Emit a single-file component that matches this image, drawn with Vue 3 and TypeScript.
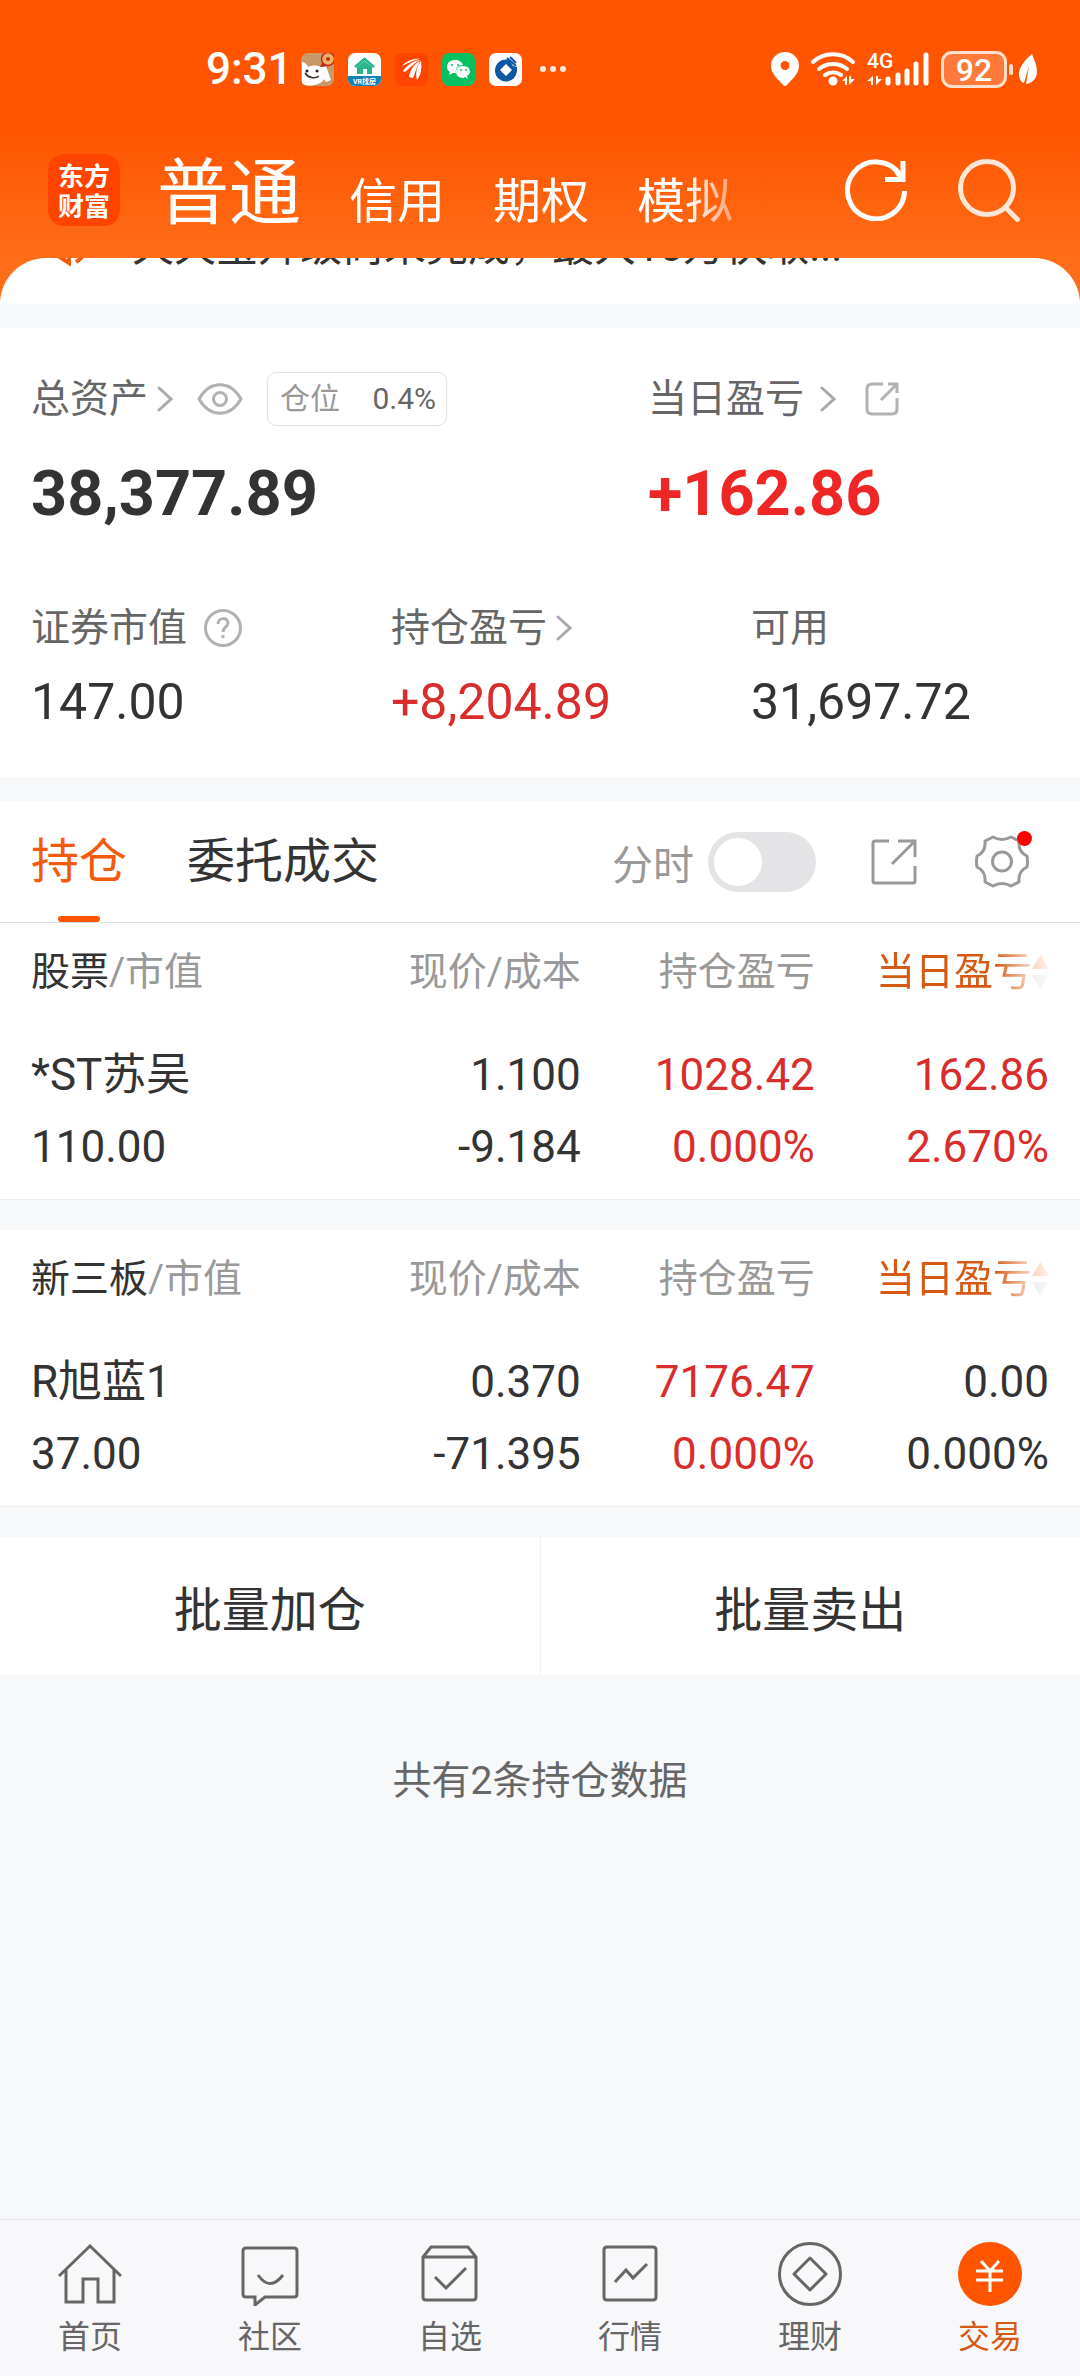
<script setup lang="ts">
import { ref } from 'vue'

interface Holding {
  name: string
  value: string
  price: string
  cost: string
  profit: string
  profitRate: string
  day: string
  dayRate: string
  dayUp: boolean
}

interface Section {
  title: string
  rows: Holding[]
}

const showTrend = ref(false)

const accountTabs = ['普通', '信用', '期权', '模拟']

const sections: Section[] = [
  {
    title: '股票',
    rows: [
      {
        name: '*ST苏吴', value: '110.00', price: '1.100', cost: '-9.184',
        profit: '1028.42', profitRate: '0.000%', day: '162.86', dayRate: '2.670%', dayUp: true,
      },
    ],
  },
  {
    title: '新三板',
    rows: [
      {
        name: 'R旭蓝1', value: '37.00', price: '0.370', cost: '-71.395',
        profit: '7176.47', profitRate: '0.000%', day: '0.00', dayRate: '0.000%', dayUp: false,
      },
    ],
  },
]
</script>

<template>
  <div class="page">
    <header class="top">
      <div class="status">
        <time class="clock">9:31</time>
        <div class="apps">
          <svg class="app" viewBox="0 0 33 33">
            <rect width="33" height="33" rx="7" fill="#c99a68" />
            <path d="M1 9c3 0 5 3 6 5 4-2 9-2 13 0l5-1 5 14-5 2-2-3c-2 6-18 9-22 4z" fill="#fff" />
            <path d="M4 20c3 5 10 6 14 3" fill="none" stroke="#3a2a22" stroke-width="1.5" />
            <circle cx="6" cy="18" r="1.5" fill="#222" /><circle cx="16" cy="18" r="1.5" fill="#222" />
            <path d="M19 14l3-6 6 5z" fill="#c8281e" /><circle cx="27" cy="6" r="6.500" fill="#f0b265" stroke="#c8281e" stroke-width="1.500" />
            <circle cx="27" cy="6" r="2" fill="#c8281e" />
          </svg>
          <svg class="app" viewBox="0 0 33 33">
            <rect width="33" height="33" rx="7" fill="#fff" />
            <path d="M0 23h33v3a7 7 0 0 1-7 7H7a7 7 0 0 1-7-7z" fill="#1283b5" />
            <path d="M7 14l9.500-8 9.500 8" fill="none" stroke="#27b58c" stroke-width="2.500" />
            <path d="M9 14l7.500-6 7.500 6v7h-5v-5h-4v5H9z" fill="#27b58c" />
            <text x="16.500" y="31" text-anchor="middle" font-size="7" font-weight="700" fill="#fff">VR找房</text>
          </svg>
          <svg class="app" viewBox="0 0 33 33">
            <rect width="33" height="33" rx="7" fill="#ff4400" />
            <path d="M7 13C12 7 20 5 25 6c-6 1-12 4-18 7zM8 18c4-6 10-10 17-11-6 3-10 8-15 12zM14 24c1-7 5-13 11-16-3 5-5 12-7 17zM22 27c-2-7 0-14 4-19 1 8 0 14-4 19z" fill="#fff" />
          </svg>
          <svg class="app" viewBox="0 0 33 33">
            <rect width="33" height="33" rx="7" fill="#07c160" />
            <path d="M13 7c-5 0-8 3-8 7 0 2 1 4 3 5l-1 3 4-2h3c-1-5 2-8 7-8-1-3-4-5-8-5z" fill="#fff" />
            <path d="M21 13c-4 0-7 2-7 6 0 3 3 6 7 6l2-1 3 2-1-3c2-1 3-3 3-4 0-4-3-6-7-6z" fill="#fff" />
            <g fill="#07c160"><circle cx="10" cy="12" r="1" /><circle cx="16" cy="12" r="1" /><circle cx="19" cy="17" r="1" /><circle cx="24" cy="17" r="1" /></g>
          </svg>
          <svg class="app" viewBox="0 0 33 33">
            <rect width="33" height="33" rx="7" fill="#fff" />
            <path fill-rule="evenodd" d="M20 6.500h-3A11 11 0 1 0 28 17v-3l-4-1zM17 11l6 6-6 6-6-6z" fill="#0b57a4" />
            <path d="M18 5l9 8M21 4l6 6" stroke="#0b57a4" stroke-width="2" />
          </svg>
        </div>
        <svg class="dots" viewBox="0 0 26 6"><g fill="#ffe9dc"><circle cx="3" cy="3" r="3" /><circle cx="13" cy="3" r="3" /><circle cx="23" cy="3" r="3" /></g></svg>
        <div class="signals">
          <svg width="28" height="34" viewBox="0 0 28 34"><path fill-rule="evenodd" d="M14 0a14 14 0 0 0-14 14c0 8 8 14 12 19q2 2 4 0c4-5 12-11 12-19A14 14 0 0 0 14 0zm0 9a4.500 4.500 0 1 1 0 9 4.500 4.500 0 0 1 0-9z" fill="#fff" /></svg>
          <svg width="44" height="34" viewBox="0 0 44 34">
            <g fill="none" stroke="#fff" stroke-width="4" stroke-linecap="round"><path d="M2 10a30 30 0 0 1 40 0" /><path d="M8 17a22 22 0 0 1 28 0" /><path d="M14 23a14 14 0 0 1 16 0" /></g>
            <circle cx="22" cy="29" r="4.500" fill="#fff" /><path d="M31 29l5-5v9h-2v-4zM38 24v9l6-6h-4v-3z" fill="#fff" />
          </svg>
          <svg class="mobile" width="62" height="36" viewBox="0 0 62 36">
            <text x="0" y="17" font-size="21" font-weight="500" fill="#fff">4G</text>
            <path d="M0 30l6-5v9H4v-4zM9 25v9l6-6h-4v-3z" fill="#fff" />
            <g stroke="#fff" stroke-width="5" stroke-linecap="round"><path d="M21 28v4M31 24v8M40 20v12M49 13v19M59 4v28" /></g>
          </svg>
          <span class="battery">92</span>
          <i class="nub"></i>
          <svg class="leaf" width="18" height="30" viewBox="0 0 18 30"><path d="M13 0C6 6 0 13 0 20c0 5 2 8 5 9l5-17-3 18c7-1 11-6 11-13 0-6-3-11-5-17z" fill="#fff" /></svg>
        </div>
      </div>
      <div class="title">
        <div class="logo"><span>东方</span><span>财富</span></div>
        <nav class="accounts">
          <a v-for="(t, i) in accountTabs" :key="t" href="#" :class="{ current: i === 0 }">{{ t }}</a>
        </nav>
        <button class="icon-btn" aria-label="刷新">
          <svg width="62" height="62" viewBox="0 0 62 62" fill="none" stroke="#fff" stroke-width="5"><path d="M59.500 32A28.500 28.500 0 1 1 55 16" /><path d="M58 2v18.500H40M57 20L50 10" /></svg>
        </button>
        <button class="icon-btn search" aria-label="搜索">
          <svg width="62" height="64" viewBox="0 0 62 64" fill="none" stroke="#ffe6d6" stroke-width="5"><circle cx="29" cy="30" r="26.500" /><path d="M47 49l14 14" /></svg>
        </button>
      </div>
      <div class="notice">
        <svg width="40" height="40" viewBox="0 0 40 40" fill="none" stroke="#f25a0e" stroke-width="4"><path d="M20 2v35L6 28V12zM27 36q9-5 9-16" /></svg>
        <p>天天宝升级尚未完成，最大10万快取...</p>
      </div>
    </header>

    <section class="assets">
      <div class="asset-row main-row">
        <div class="cell-block">
          <div class="label">
            <a href="#">总资产<svg class="chev" viewBox="0 0 16 26"><path d="M2 2l12 11L2 24" /></svg></a>
            <button class="eye" aria-label="显示或隐藏">
              <svg width="46" height="32" viewBox="0 0 46 32" fill="none" stroke="#b2b2b2" stroke-width="3"><path d="M2 16C13-3 33-3 44 16 33 35 13 35 2 16z" /><circle cx="23" cy="16" r="6.500" /></svg>
            </button>
            <span class="ratio"><em>仓位</em><b>0.4%</b></span>
          </div>
          <strong>38,377.89</strong>
        </div>
        <div class="cell-block">
          <div class="label">
            <a href="#" class="wide">当日盈亏<svg class="chev" viewBox="0 0 16 26"><path d="M2 2l12 11L2 24" /></svg></a>
            <button class="share-small" aria-label="分享">
              <svg width="34" height="34" viewBox="0 0 34 34" fill="none" stroke="#b2b2b2" stroke-width="3"><path d="M18 2H7Q2 2 2 7v20q0 5 5 5h20q5 0 5-5V16M16 18L32 2M23 2h9v9" /></svg>
            </button>
          </div>
          <strong class="up">+162.86</strong>
        </div>
      </div>
      <div class="asset-row">
        <div class="cell-block">
          <div class="label">
            <span>证券市值</span>
            <button class="help" aria-label="说明">
              <svg width="38" height="38" viewBox="0 0 38 38" fill="none" stroke="#b2b2b2" stroke-width="3"><circle cx="19" cy="19" r="17.500" /><path d="M14 15c0-7 10-7 10-1 0 4-5 4-5 9" /><path d="M19 26v3" /></svg>
            </button>
          </div>
          <span class="num">147.00</span>
        </div>
        <div class="cell-block">
          <div class="label"><a href="#">持仓盈亏<svg class="chev" viewBox="0 0 16 26"><path d="M2 2l12 11L2 24" /></svg></a></div>
          <span class="num up">+8,204.89</span>
        </div>
        <div class="cell-block">
          <div class="label"><span>可用</span></div>
          <span class="num">31,697.72</span>
        </div>
      </div>
    </section>

    <div class="tabs">
      <a href="#" class="tab current">持仓</a>
      <a href="#" class="tab">委托成交</a>
      <label class="trend" for="trend">分时</label>
      <input id="trend" v-model="showTrend" class="switch" type="checkbox" />
      <button class="share-big" aria-label="分享持仓">
        <svg width="46" height="46" viewBox="0 0 46 46" fill="none" stroke="#999" stroke-width="3"><path d="M18 2H4Q2 2 2 4v38q0 2 2 2h38q2 0 2-2V27M21 25L44 2M27 2h17v16" /></svg>
      </button>
      <button class="gear" aria-label="设置">
        <svg width="54" height="53" viewBox="0 0 54 53" fill="none" stroke="#999" stroke-width="3" stroke-linejoin="round"><path d="M18 2Q27 7 36 2L44 6Q43 17 52 21 53 27 52 32 43 36 44 47L36 51Q27 46 18 51L10 47Q11 36 2 32 1 27 2 21 11 17 10 6z" /><circle cx="27" cy="26.500" r="9.500" /></svg>
      </button>
    </div>

    <table v-for="s in sections" :key="s.title" class="holdings">
      <colgroup><col class="c1" /><col class="c2" /><col class="c3" /><col class="c4" /></colgroup>
      <thead>
        <tr>
          <th><b>{{ s.title }}</b>/市值</th>
          <th>现价/成本</th>
          <th>持仓盈亏</th>
          <th><span class="sort">当日盈亏<svg width="17" height="36" viewBox="0 0 17 36"><path d="M8.500 1L17 15H0z" fill="#ff5500" /><path d="M8.500 35L17 21H0z" fill="#bbb" /></svg></span></th>
        </tr>
      </thead>
      <tbody>
        <tr v-for="r in s.rows" :key="r.name">
          <td><div>{{ r.name }}</div><div>{{ r.value }}</div></td>
          <td><div>{{ r.price }}</div><div>{{ r.cost }}</div></td>
          <td class="up"><div>{{ r.profit }}</div><div>{{ r.profitRate }}</div></td>
          <td :class="{ up: r.dayUp }"><div>{{ r.day }}</div><div>{{ r.dayRate }}</div></td>
        </tr>
      </tbody>
    </table>

    <div class="batch">
      <button>批量加仓</button>
      <button>批量卖出</button>
    </div>

    <p class="total">共有2条持仓数据</p>

    <nav class="bottom">
      <a href="#">
        <svg viewBox="0 0 64 64"><path d="M1 34L32 4l31 30M8 28v32h17V37h15v23h16V28" /></svg>
        首页
      </a>
      <a href="#">
        <svg viewBox="0 0 64 64"><path d="M8 6h48q3 0 3 3v43q0 3-3 3H27l-10 8v-8H8q-3 0-3-3V9q0-3 3-3z" /><path d="M20 33q12 17 25 0" /></svg>
        社区
      </a>
      <a href="#">
        <svg viewBox="0 0 64 64"><path d="M5 15v40q0 3 3 3h47q3 0 3-3V15l-8-10H13zM5 15h53M17 35l11 11 20-20" /></svg>
        自选
      </a>
      <a href="#">
        <svg viewBox="0 0 64 64"><path d="M9 5h46q3 0 3 3v47q0 3-3 3H9q-3 0-3-3V8q0-3 3-3zM17 40l11-12 7 8 14-14" /></svg>
        行情
      </a>
      <a href="#">
        <svg viewBox="0 0 64 64"><circle cx="32" cy="32" r="30.500" /><path d="M32 16l16 16-16 16-16-16z" stroke-linejoin="round" /></svg>
        理财
      </a>
      <a href="#" class="current">
        <svg viewBox="0 0 64 64"><circle cx="32" cy="32" r="32" fill="#ff5500" stroke="none" /><path d="M23 19l9 10 9-10M18 29h27M18 38h27M32 29v21" stroke="#fff" /></svg>
        交易
      </a>
    </nav>
  </div>
</template>

<style>
body {
  background: #f6f8fa;
}
</style>

<style scoped>
.page {
  display: flex;
  flex-direction: column;
  min-height: 100vh;
  background: #f7f8fa;
  color: #333;
  font-family: Roboto, "Noto Sans CJK SC", sans-serif;
}
a {
  color: inherit;
  text-decoration: none;
}
button {
  display: flex;
  align-items: center;
  justify-content: center;
  padding: 0;
  border: 0;
  background: none;
  color: inherit;
  font: inherit;
}
svg {
  display: block;
  flex: none;
}
p {
  margin: 0;
}
.up {
  color: #d92d2d;
}

.top {
  background: linear-gradient(#ff5500 130px, #ff6d18 258px);
}
.status {
  display: flex;
  align-items: center;
  height: 138px;
  padding: 0 43px 0 206px;
}
.clock {
  width: 95px;
  color: #fff;
  font-size: 44px;
  font-weight: 500;
  line-height: 52px;
}
.apps {
  display: flex;
  gap: 14px;
}
.app {
  width: 33px;
  height: 33px;
}
.dots {
  width: 26px;
  margin-left: 18px;
}
.signals {
  display: flex;
  align-items: center;
  gap: 12px;
  margin-left: auto;
}
.mobile {
  overflow: visible;
}
.battery {
  box-sizing: border-box;
  width: 66px;
  height: 37px;
  border: 3px solid #ffe0cc;
  border-radius: 11px;
  background: #ff7a3a;
  color: #fff;
  font-size: 32px;
  font-weight: 500;
  line-height: 32px;
  text-align: center;
}
.nub {
  width: 4px;
  height: 11px;
  margin-left: -10px;
  border-radius: 2px;
  background: #ffe0cc;
}
.leaf {
  margin-left: -6px;
}
.title {
  display: flex;
  align-items: center;
  box-sizing: border-box;
  height: 120px;
  padding: 0 60px 16px 48px;
}
.logo {
  display: flex;
  flex-direction: column;
  justify-content: center;
  flex: none;
  width: 72px;
  height: 72px;
  border-radius: 16px;
  background: #ff4400;
  color: #fff;
  font-family: "Noto Sans CJK SC", sans-serif;
  font-size: 26px;
  font-weight: 700;
  line-height: 30px;
  text-align: center;
}
.accounts {
  display: flex;
  align-items: baseline;
  gap: 48px;
  flex: none;
  margin-left: 37px;
  margin-right: auto;
  padding-top: 16px;
  color: #fff;
  font-size: 48px;
  line-height: 72px;
  -webkit-mask-image: linear-gradient(to right, #000 92%, rgba(0, 0, 0, 0.4));
  mask-image: linear-gradient(to right, #000 92%, rgba(0, 0, 0, 0.4));
}
.accounts .current {
  font-size: 72px;
}
.search {
  margin-left: 51px;
}
.notice {
  display: flex;
  align-items: flex-start;
  height: 46px;
  padding-left: 49px;
  overflow: hidden;
  border-radius: 46px 46px 0 0;
  background: #fff;
  font-size: 42px;
  line-height: 60px;
}
.notice svg {
  margin-top: -32px;
}
.notice p {
  margin: -41px 0 0 43px;
  white-space: nowrap;
}

.assets {
  margin: 24px 0;
  padding: 41px 0 45px;
  background: #fff;
}
.asset-row {
  display: flex;
}
.cell-block {
  flex: 1 1 0;
  padding-left: 31px;
}
.main-row {
  margin-bottom: 68px;
}
.main-row .cell-block:first-child {
  flex: 0 0 auto;
  box-sizing: border-box;
  width: 57%;
  margin-right: 3%;
}
.main-row .cell-block:last-child {
  padding-left: 0;
}
.label {
  display: flex;
  align-items: center;
  height: 60px;
  color: #666;
  font-size: 39px;
  line-height: 60px;
  white-space: nowrap;
}
.label a {
  display: flex;
  align-items: center;
  gap: 9px;
}
.label .wide {
  gap: 16px;
}
.chev {
  width: 16px;
  height: 26px;
  fill: none;
  stroke: #aaa;
  stroke-width: 3;
  stroke-linecap: round;
}
.eye {
  margin-left: 24px;
}
.share-small {
  margin-left: 29px;
}
.help {
  margin-left: 17px;
}
.ratio {
  display: flex;
  align-items: center;
  justify-content: space-between;
  box-sizing: border-box;
  width: 180px;
  height: 54px;
  margin-left: 24px;
  padding: 0 10px 0 12px;
  border: 1px solid #e0e0e0;
  border-radius: 9px;
  font-size: 30px;
}
.ratio em {
  color: #999;
  font-style: normal;
}
.ratio b {
  font-weight: 400;
}
.assets strong {
  display: block;
  margin-top: 29px;
  font-size: 63px;
  line-height: 72px;
}
.assets strong.up {
  color: #ee2626;
}
.num {
  display: block;
  margin-top: 14px;
  font-size: 50px;
  line-height: 60px;
}

.tabs {
  display: flex;
  align-items: center;
  height: 121px;
  padding: 0 51px 0 31px;
  border-bottom: 1px solid #ddd;
  background: #fff;
}
.tab {
  position: relative;
  margin-right: 60px;
  font-size: 48px;
  line-height: 121px;
}
.tab.current {
  color: #f25a0e;
}
.tab.current::after {
  position: absolute;
  bottom: 0;
  left: 50%;
  width: 42px;
  height: 6px;
  margin-left: -21px;
  border-radius: 3px;
  background: #ff5500;
  content: "";
}
.trend {
  margin-left: auto;
  color: #999;
  font-size: 41px;
}
.switch {
  flex: none;
  width: 108px;
  height: 60px;
  margin: 0 0 0 14px;
  padding: 6px;
  box-sizing: border-box;
  border-radius: 30px;
  background: #e4e4e6;
  appearance: none;
}
.switch::before {
  display: block;
  width: 48px;
  height: 48px;
  border-radius: 50%;
  background: #fff;
  content: "";
}
.switch:checked {
  background: #ff5500;
}
.switch:checked::before {
  margin-left: auto;
}
.share-big {
  margin-left: 55px;
}
.gear {
  position: relative;
  margin-left: 58px;
}
.gear::after {
  position: absolute;
  top: -4px;
  right: -3px;
  width: 15px;
  height: 15px;
  border-radius: 50%;
  background: #f00;
  content: "";
}

.holdings {
  width: 100%;
  margin-bottom: 30px;
  padding: 0 31px;
  border-bottom: 1px solid #eee;
  border-spacing: 0;
  background: #fff;
  table-layout: fixed;
}
.c1 {
  width: 35%;
}
.c2 {
  width: 19%;
}
.c3,
.c4 {
  width: 23%;
}
th,
td {
  padding: 0;
  text-align: right;
  white-space: nowrap;
}
th:first-child,
td:first-child {
  text-align: left;
}
th {
  padding-top: 1px;
  color: #999;
  font-size: 39px;
  font-weight: 400;
  line-height: 96px;
}
th b {
  color: #333;
  font-weight: 400;
}
.sort {
  display: flex;
  align-items: center;
  justify-content: flex-end;
  color: #d75a14;
  -webkit-mask-image: linear-gradient(to right, #000 77%, rgba(0, 0, 0, 0.3) 91%, rgba(0, 0, 0, 0.08));
  mask-image: linear-gradient(to right, #000 77%, rgba(0, 0, 0, 0.3) 91%, rgba(0, 0, 0, 0.08));
}
td {
  padding: 19px 0 16px;
  font-size: 44px;
  line-height: 72px;
}

.batch {
  display: flex;
  background: #fff;
}
.batch button {
  flex: 1;
  height: 138px;
  font-size: 48px;
}
.batch button + button {
  border-left: 1px solid #f2f2f2;
}
.total {
  margin: 76px 0 auto;
  color: #666;
  font-size: 39px;
  line-height: 60px;
  text-align: center;
}

.bottom {
  display: flex;
  height: 156px;
  border-top: 1px solid #e0e2e4;
  background: #f8f8fa;
}
.bottom a {
  display: flex;
  flex-direction: column;
  align-items: center;
  flex: 1;
  padding-top: 22px;
  color: #666;
  font-size: 32px;
  line-height: 62px;
}
.bottom svg {
  width: 64px;
  height: 64px;
  fill: none;
  stroke: #666;
  stroke-width: 3;
}
.bottom .current {
  color: #d75a14;
}
</style>
